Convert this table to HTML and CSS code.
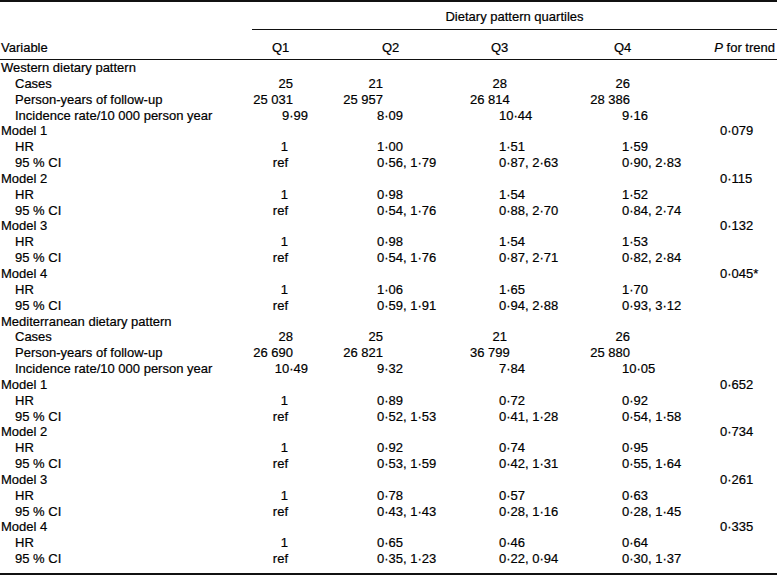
FILE: index.html
```html
<!DOCTYPE html>
<html lang="en">
<head>
<meta charset="utf-8">
<title>Dietary pattern quartiles</title>
<link rel="stylesheet" href="styles.css">
</head>
<body>
<div class="tbl">
  <div class="row spanrow">
    <div class="cell"></div>
    <div class="cell spanner">Dietary pattern quartiles</div>
  </div>
  <div class="row headrow">
    <div class="cell lab">Variable</div>
    <div class="cell h q1">Q1</div>
    <div class="cell h q2">Q2</div>
    <div class="cell h q3">Q3</div>
    <div class="cell h q4">Q4</div>
    <div class="cell h p"><i>P</i> for trend</div>
  </div>
  <div class="body">
    <div class="row sec"><div class="cell lab">Western dietary pattern</div></div>
    <div class="row int"><div class="cell lab sub">Cases</div><div class="cell q1">25</div><div class="cell q2">21</div><div class="cell q3">28</div><div class="cell q4">26</div></div>
    <div class="row int"><div class="cell lab sub">Person-years of follow-up</div><div class="cell q1">25 031</div><div class="cell q2">25 957</div><div class="cell q3">26 814</div><div class="cell q4">28 386</div></div>
    <div class="row dec"><div class="cell lab sub">Incidence rate/10 000 person year</div><div class="cell q1">9·99</div><div class="cell q2">8·09</div><div class="cell q3">10·44</div><div class="cell q4">9·16</div></div>
    <div class="row model"><div class="cell lab">Model 1</div><div class="cell q1"></div><div class="cell q2"></div><div class="cell q3"></div><div class="cell q4"></div><div class="cell p">0·079</div></div>
    <div class="row est"><div class="cell lab sub">HR</div><div class="cell q1">1</div><div class="cell q2">1·00</div><div class="cell q3">1·51</div><div class="cell q4">1·59</div></div>
    <div class="row est"><div class="cell lab sub">95 % CI</div><div class="cell q1">ref</div><div class="cell q2">0·56, 1·79</div><div class="cell q3">0·87, 2·63</div><div class="cell q4">0·90, 2·83</div></div>
    <div class="row model"><div class="cell lab">Model 2</div><div class="cell q1"></div><div class="cell q2"></div><div class="cell q3"></div><div class="cell q4"></div><div class="cell p">0·115</div></div>
    <div class="row est"><div class="cell lab sub">HR</div><div class="cell q1">1</div><div class="cell q2">0·98</div><div class="cell q3">1·54</div><div class="cell q4">1·52</div></div>
    <div class="row est"><div class="cell lab sub">95 % CI</div><div class="cell q1">ref</div><div class="cell q2">0·54, 1·76</div><div class="cell q3">0·88, 2·70</div><div class="cell q4">0·84, 2·74</div></div>
    <div class="row model"><div class="cell lab">Model 3</div><div class="cell q1"></div><div class="cell q2"></div><div class="cell q3"></div><div class="cell q4"></div><div class="cell p">0·132</div></div>
    <div class="row est"><div class="cell lab sub">HR</div><div class="cell q1">1</div><div class="cell q2">0·98</div><div class="cell q3">1·54</div><div class="cell q4">1·53</div></div>
    <div class="row est"><div class="cell lab sub">95 % CI</div><div class="cell q1">ref</div><div class="cell q2">0·54, 1·76</div><div class="cell q3">0·87, 2·71</div><div class="cell q4">0·82, 2·84</div></div>
    <div class="row model"><div class="cell lab">Model 4</div><div class="cell q1"></div><div class="cell q2"></div><div class="cell q3"></div><div class="cell q4"></div><div class="cell p">0·045*</div></div>
    <div class="row est"><div class="cell lab sub">HR</div><div class="cell q1">1</div><div class="cell q2">1·06</div><div class="cell q3">1·65</div><div class="cell q4">1·70</div></div>
    <div class="row est"><div class="cell lab sub">95 % CI</div><div class="cell q1">ref</div><div class="cell q2">0·59, 1·91</div><div class="cell q3">0·94, 2·88</div><div class="cell q4">0·93, 3·12</div></div>

    <div class="row sec"><div class="cell lab">Mediterranean dietary pattern</div></div>
    <div class="row int"><div class="cell lab sub">Cases</div><div class="cell q1">28</div><div class="cell q2">25</div><div class="cell q3">21</div><div class="cell q4">26</div></div>
    <div class="row int"><div class="cell lab sub">Person-years of follow-up</div><div class="cell q1">26 690</div><div class="cell q2">26 821</div><div class="cell q3">36 799</div><div class="cell q4">25 880</div></div>
    <div class="row dec"><div class="cell lab sub">Incidence rate/10 000 person year</div><div class="cell q1">10·49</div><div class="cell q2">9·32</div><div class="cell q3">7·84</div><div class="cell q4">10·05</div></div>
    <div class="row model"><div class="cell lab">Model 1</div><div class="cell q1"></div><div class="cell q2"></div><div class="cell q3"></div><div class="cell q4"></div><div class="cell p">0·652</div></div>
    <div class="row est"><div class="cell lab sub">HR</div><div class="cell q1">1</div><div class="cell q2">0·89</div><div class="cell q3">0·72</div><div class="cell q4">0·92</div></div>
    <div class="row est"><div class="cell lab sub">95 % CI</div><div class="cell q1">ref</div><div class="cell q2">0·52, 1·53</div><div class="cell q3">0·41, 1·28</div><div class="cell q4">0·54, 1·58</div></div>
    <div class="row model"><div class="cell lab">Model 2</div><div class="cell q1"></div><div class="cell q2"></div><div class="cell q3"></div><div class="cell q4"></div><div class="cell p">0·734</div></div>
    <div class="row est"><div class="cell lab sub">HR</div><div class="cell q1">1</div><div class="cell q2">0·92</div><div class="cell q3">0·74</div><div class="cell q4">0·95</div></div>
    <div class="row est"><div class="cell lab sub">95 % CI</div><div class="cell q1">ref</div><div class="cell q2">0·53, 1·59</div><div class="cell q3">0·42, 1·31</div><div class="cell q4">0·55, 1·64</div></div>
    <div class="row model"><div class="cell lab">Model 3</div><div class="cell q1"></div><div class="cell q2"></div><div class="cell q3"></div><div class="cell q4"></div><div class="cell p">0·261</div></div>
    <div class="row est"><div class="cell lab sub">HR</div><div class="cell q1">1</div><div class="cell q2">0·78</div><div class="cell q3">0·57</div><div class="cell q4">0·63</div></div>
    <div class="row est"><div class="cell lab sub">95 % CI</div><div class="cell q1">ref</div><div class="cell q2">0·43, 1·43</div><div class="cell q3">0·28, 1·16</div><div class="cell q4">0·28, 1·45</div></div>
    <div class="row model"><div class="cell lab">Model 4</div><div class="cell q1"></div><div class="cell q2"></div><div class="cell q3"></div><div class="cell q4"></div><div class="cell p">0·335</div></div>
    <div class="row est"><div class="cell lab sub">HR</div><div class="cell q1">1</div><div class="cell q2">0·65</div><div class="cell q3">0·46</div><div class="cell q4">0·64</div></div>
    <div class="row est"><div class="cell lab sub">95 % CI</div><div class="cell q1">ref</div><div class="cell q2">0·35, 1·23</div><div class="cell q3">0·22, 0·94</div><div class="cell q4">0·30, 1·37</div></div>
  </div>
</div>
</body>
</html>
```

FILE: styles.css
```css
* { box-sizing: border-box; margin: 0; padding: 0; }

body {
  margin: 0;
  background: #fff;
  color: #000;
  font-family: "Liberation Sans", Arial, Helvetica, sans-serif;
  font-size: 13px;
  -webkit-text-stroke: 0.2px #000;
}

.tbl {
  width: 777px;
  border-top: 2px solid #111;
  border-bottom: 2px solid #111;
}

.row {
  display: grid;
  grid-template-columns: 252px 88px 130px 120px 110px 77px;
  line-height: 16px;
  white-space: nowrap;
}

/* spanner row */
.spanrow { height: 28px; }
.spanner {
  grid-column: 2 / 7;
  text-align: center;
  border-bottom: 1px solid #111;
  padding-top: 7px;
}

/* column heading row */
.headrow {
  height: 30px;
  border-bottom: 1px solid #111;
  align-items: end;
  padding-bottom: 3px;
}
.h.q1 { padding-left: 20px; }
.h.q2 { padding-left: 42px; }
.h.q3 { padding-left: 21px; }
.h.q4 { padding-left: 24px; }
.h.p { text-align: right; padding-right: 2px; }

/* body */
.body { padding-bottom: 6px; }
.body .row { height: 15.85px; }

.lab { padding-left: 1px; }
.lab.sub { padding-left: 15px; }

/* per-column alignment settings */
.q1 { --int: 47px; }
.q2 { --int: 87px; --lead: 37px; }
.q3 { --int: 83px; --lead: 29px; }
.q4 { --int: 70px; --lead: 32px; }

.int .q1, .int .q2, .int .q3, .int .q4 {
  text-align: right;
  padding-right: var(--int);
}
.dec .q2, .dec .q3, .dec .q4,
.est .q2, .est .q3, .est .q4 {
  padding-left: var(--lead);
}
.dec .q1 { text-align: right; padding-right: 32px; }
.est .q1 { text-align: right; padding-right: 52px; }

.model .p { padding-left: 20px; }
```
